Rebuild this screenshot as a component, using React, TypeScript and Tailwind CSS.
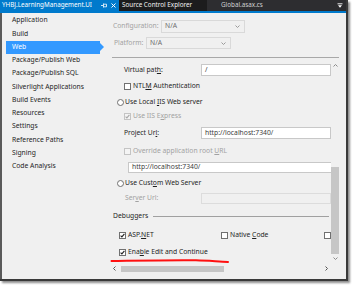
import React from "react";

function Check({ checked, disabled }: { checked?: boolean; disabled?: boolean }) {
  return (
    <span
      className={
        "w-[7px] h-[7px] shrink-0 border flex items-center justify-center " +
        (disabled ? "border-[#c4c4c4] bg-[#f4f4f4]" : "border-[#707070] bg-white")
      }
    >
      {checked && (
        <svg width="5" height="5" viewBox="0 0 5 5">
          <path d="M0.6 2.6 L1.9 3.9 L4.4 0.8" fill="none" stroke={disabled ? "#a8a8a8" : "#222"} strokeWidth="1.1" />
        </svg>
      )}
    </span>
  );
}

function Radio() {
  return <span className="w-[7px] h-[7px] shrink-0 rounded-full border border-[#707070] bg-white" />;
}

function Chevron({ dir, color = "#8a8a8a" }: { dir: "up" | "down" | "left" | "right"; color?: string }) {
  const d = {
    up: "M0.5 3.5 L2.5 1.5 L4.5 3.5",
    down: "M0.5 1.5 L2.5 3.5 L4.5 1.5",
    left: "M3.5 0.5 L1.5 2.5 L3.5 4.5",
    right: "M1.5 0.5 L3.5 2.5 L1.5 4.5",
  }[dir];
  return (
    <svg width="5" height="5" viewBox="0 0 5 5">
      <path d={d} fill="none" stroke={color} strokeWidth="1" />
    </svg>
  );
}

function TabBar() {
  return (
    <div className="h-[11px] flex bg-[#2d2d30] text-white text-[6.3px] whitespace-nowrap">
      <div className="w-[119px] bg-[#007acc] flex items-center pl-[2px] overflow-hidden">
        <span className="flex-1">YHBJ.LearningManagement.UI</span>
        <svg width="6" height="5" viewBox="0 0 6 5" className="mr-[4px] shrink-0">
          <path d="M0 2.5 H2 M2.5 0.5 V4.5 M2.5 1.2 H5.5 V3.8 H2.5" fill="none" stroke="#fff" strokeWidth="0.8" />
        </svg>
        <svg width="5" height="5" viewBox="0 0 5 5" className="mr-[3px] shrink-0">
          <path d="M0.5 0.5 L4.5 4.5 M4.5 0.5 L0.5 4.5" stroke="#fff" strokeWidth="1" />
        </svg>
      </div>
      <div className="w-[88px] bg-[#1c1c1d] flex items-center pl-[3px] text-[#f1f1f1]">Source Control Explorer</div>
      <div className="flex-1 flex items-center pl-[14px] text-[#d0d0d0]">
        <span className="flex-1">Global.asax.cs</span>
        <svg width="6" height="6" viewBox="0 0 6 6" className="mr-[3px]">
          <path d="M0.5 0.8 H5.5" stroke="#fff" strokeWidth="0.9" />
          <path d="M1 2.3 H5 L3 4.8 Z" fill="#fff" />
        </svg>
      </div>
    </div>
  );
}

const navItems = [
  "Application",
  "Build",
  "Web",
  "Package/Publish Web",
  "Package/Publish SQL",
  "Silverlight Applications",
  "Build Events",
  "Resources",
  "Settings",
  "Reference Paths",
  "Signing",
  "Code Analysis",
];

function Nav() {
  return (
    <div className="w-[106px] pt-[1px] flex flex-col">
      {navItems.map((item) => (
        <div
          key={item}
          className={
            "relative ml-[4px] w-[94px] h-[13.27px] flex items-center pl-[6px] " +
            (item === "Web" ? "bg-[#3399ff] text-white" : "")
          }
        >
          {item}
          {item === "Web" && (
            <span className="absolute left-full top-[2.5px] border-y-[4px] border-y-transparent border-l-[4px] border-l-[#3399ff]" />
          )}
        </div>
      ))}
    </div>
  );
}

function Dropdown({ width, height }: { width: string; height: string }) {
  return (
    <div className={width + " " + height + " border border-[#d9d9d9] bg-[#f0f0f0] flex items-center pl-[3px] pr-[4px] text-[#6d6d6d]"}>
      <span className="flex-1">N/A</span>
      <Chevron dir="down" color="#9a9a9a" />
    </div>
  );
}

function TextBox({ value, disabled, className }: { value?: string; disabled?: boolean; className: string }) {
  return (
    <div
      className={
        className +
        " border flex items-center pl-[3px] " +
        (disabled ? "border-[#dcdcdc] bg-[#f0f0f0]" : "border-[#c8c8c8] bg-white text-[#3c3c3c]")
      }
    >
      {value}
    </div>
  );
}

function ScrollContent() {
  return (
    <div className="w-[223px] overflow-hidden flex flex-col">
      <div className="mt-[6px] h-[12px] flex items-center pl-[16px]">
        <span className="w-[86px]">
          Virtual pat<u>h</u>:
        </span>
        <TextBox value="/" className="w-[130px] h-[12px] shrink-0" />
      </div>
      <div className="mt-[4px] h-[12px] flex items-center gap-[2px] pl-[16px]">
        <Check />
        <span>
          NTL<u>M</u> Authentication
        </span>
      </div>
      <div className="mt-[4px] h-[12px] flex items-center gap-[1px] pl-[9px]">
        <Radio />
        <span>
          Use Local <u>I</u>IS Web server
        </span>
      </div>
      <div className="mt-[2px] h-[12px] flex items-center gap-[2px] pl-[16px] text-[#a2a2a2]">
        <Check checked disabled />
        <span>
          Use IIS E<u>x</u>press
        </span>
      </div>
      <div className="mt-[5px] h-[12px] flex items-center pl-[16px]">
        <span className="w-[86px]">
          Project Ur<u>l</u>:
        </span>
        <TextBox value="http://localhost:7340/" className="w-[130px] h-[12px] shrink-0" />
      </div>
      <div className="mt-[6px] h-[12px] flex items-center gap-[2px] pl-[16px] text-[#a2a2a2]">
        <Check disabled />
        <span>
          Override application root <u>U</u>RL
        </span>
      </div>
      <div className="mt-[5px] h-[11px] flex pl-[20px]">
        <TextBox value="http://localhost:7340/" className="w-[220px] h-[11px] shrink-0 text-[#3c3c3c]" />
      </div>
      <div className="mt-[4px] h-[12px] flex items-center gap-[1px] pl-[9px]">
        <Radio />
        <span>
          Use Cust<u>o</u>m Web Server
        </span>
      </div>
      <div className="mt-[4px] h-[11px] flex items-center pl-[17px] text-[#a2a2a2]">
        <span className="w-[85px]">
          Ser<u>v</u>er Url:
        </span>
        <TextBox disabled className="w-[130px] h-[11px] shrink-0" />
      </div>
      <div className="mt-[6px] h-[12px] flex items-center pl-[5px] pr-[2px] gap-[5px]">
        <span>Debuggers</span>
        <div className="flex-1 h-px bg-[#a0a0a0]" />
      </div>
      <div className="mt-[7px] h-[12px] flex items-center pl-[11px]">
        <div className="w-[103px] flex items-center gap-[2px]">
          <Check checked />
          <span>
            ASP.<u>N</u>ET
          </span>
        </div>
        <div className="w-[104px] flex items-center gap-[2px]">
          <Check />
          <span>
            Native <u>C</u>ode
          </span>
        </div>
        <Check />
      </div>
      <div className="mt-[5px] h-[12px] flex items-center gap-[2px] pl-[11px]">
        <Check checked />
        <span>
          Ena<u>b</u>le Edit and Continue
        </span>
      </div>
    </div>
  );
}

function Content() {
  return (
    <div className="flex-1 flex flex-col">
      <div className="mt-[7px] h-[13px] flex items-center pl-[5px] text-[#a2a2a2]">
        <span className="w-[48px]">Configuration:</span>
        <Dropdown width="w-[84px]" height="h-[13px]" />
      </div>
      <div className="mt-[4px] h-[12px] flex items-center pl-[6px] text-[#a2a2a2]">
        <span className="w-[32px]">Platform:</span>
        <Dropdown width="w-[85px]" height="h-[12px]" />
      </div>
      <div className="mt-[8px] ml-[4px] w-[227px] h-px bg-[#a8a8a8]" />
      <div className="h-[205px] flex">
        <ScrollContent />
        <div className="w-[8px] flex flex-col">
          <div className="h-[12px] flex items-end justify-center pb-[2px]">
            <Chevron dir="up" />
          </div>
          <div className="h-[97px]" />
          <div className="h-[87px] bg-[#c6c6c6]" />
          <div className="flex-1 flex items-center justify-center">
            <Chevron dir="down" />
          </div>
        </div>
      </div>
      <div className="h-[11px] w-[223px] flex items-center">
        <div className="w-[12px] flex justify-center">
          <Chevron dir="left" color="#555" />
        </div>
        <div className="ml-[1px] w-[103px] h-[6px] bg-[#c6c6c6]" />
        <div className="flex-1" />
        <div className="w-[10px] flex justify-center">
          <Chevron dir="right" color="#555" />
        </div>
      </div>
    </div>
  );
}

export default function App() {
  return (
    <div className="relative w-[352px] h-[285px] bg-white font-['Noto_Sans',sans-serif] text-[6.75px] leading-none text-[#1e1e1e]">
      <div className="w-[348px] h-[281px] flex flex-col bg-[#f0f0f0] border-r-2 border-b-2 border-[#3a3a3a] shadow-[2px_2px_2px_rgba(0,0,0,0.45)]">
        <TabBar />
        <div className="h-[2px] bg-[#007acc]" />
        <div className="flex-1 flex border-l-2 border-[#5a5a5a]">
          <Nav />
          <Content />
        </div>
      </div>
      {/* red annotation stroke */}
      <svg className="absolute left-0 top-0" width="352" height="285" viewBox="0 0 352 285">
        <path
          d="M111.5 261 C140 260.6 170 260 196 260.3 C208 260.6 218 261.6 228 262"
          fill="none"
          stroke="#ff1010"
          strokeWidth="2"
          strokeLinecap="round"
        />
      </svg>
    </div>
  );
}
